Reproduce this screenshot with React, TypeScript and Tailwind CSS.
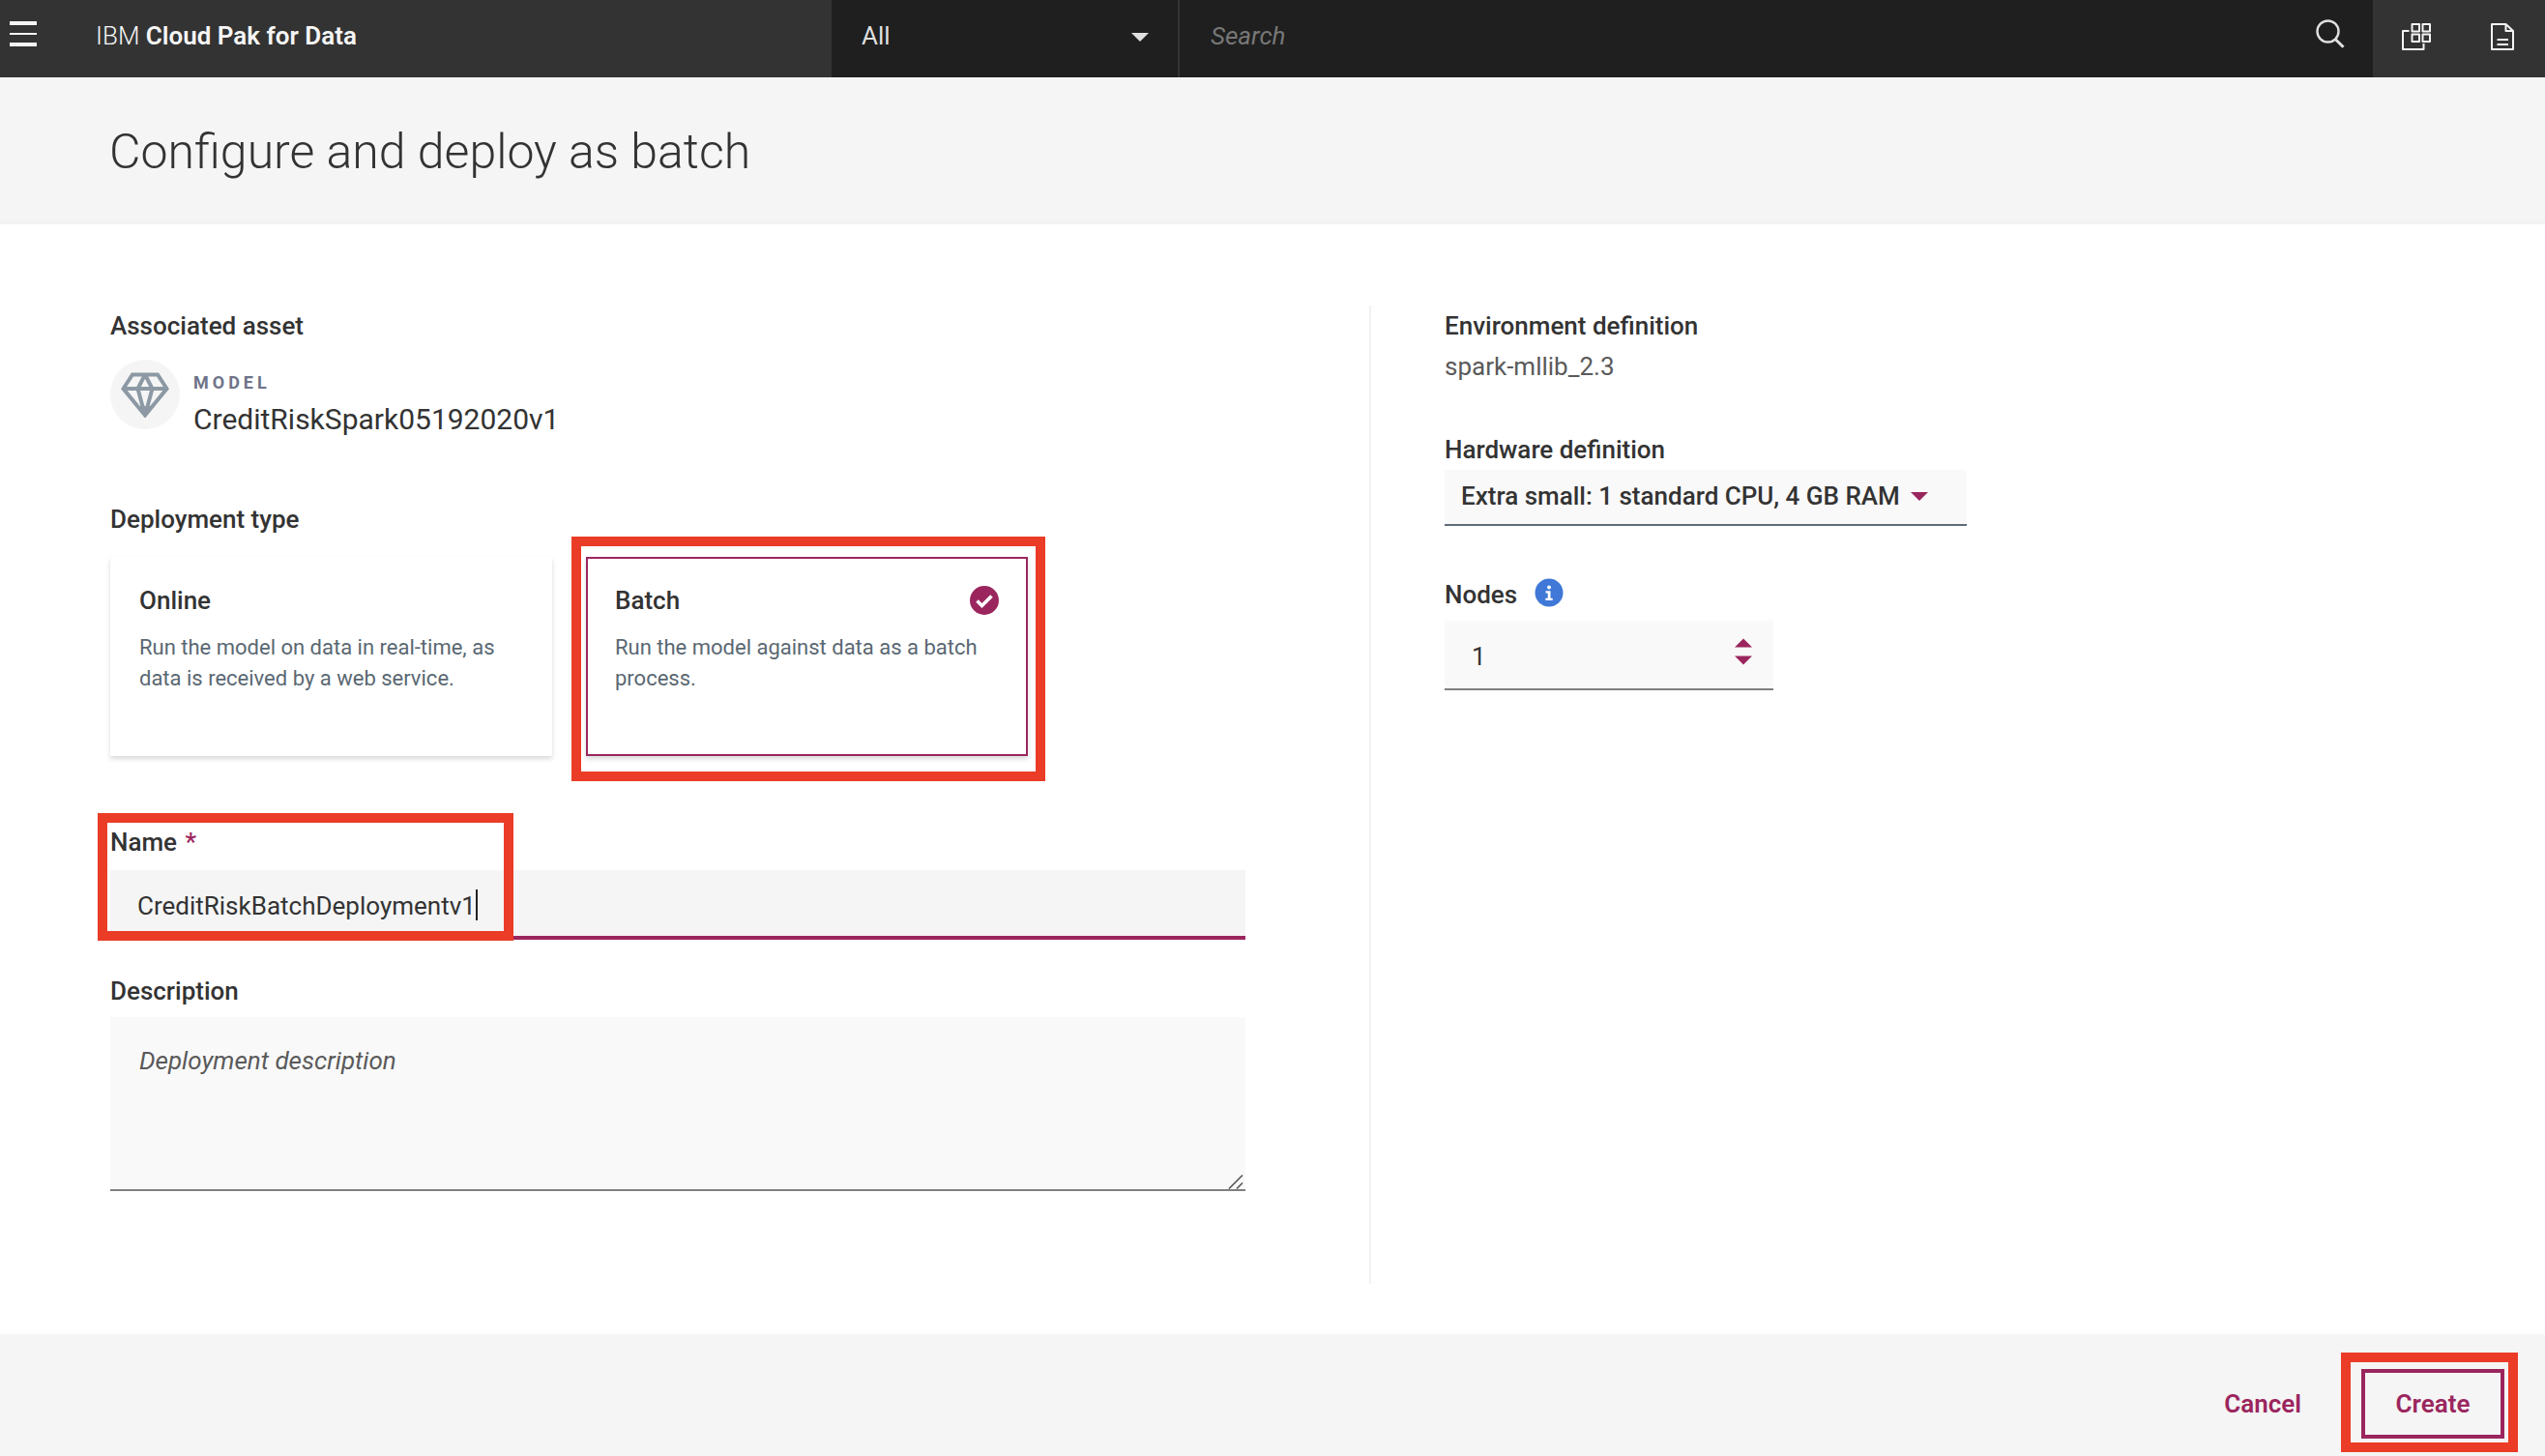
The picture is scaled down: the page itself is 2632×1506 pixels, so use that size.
import { useState, type ReactNode } from "react";

const label = "block text-[26px] leading-[34px] font-medium text-[#333]";

function Highlight({ className }: { className: string }) {
  return <div aria-hidden="true" className={`pointer-events-none absolute border-10 border-[#eb3c27] ${className}`} />;
}

function Caret({ className }: { className: string }) {
  return (
    <svg aria-hidden="true" viewBox="0 0 18 9" className={className} fill="currentColor">
      <path d="M0 0h18L9 9z" />
    </svg>
  );
}

function HeaderIcon({ name, children }: { name: string; children: ReactNode }) {
  return (
    <button type="button" aria-label={name} className="flex w-[89px] items-center justify-center text-[#f4f4f4]">
      {children}
    </button>
  );
}

function Header() {
  return (
    <header className="flex h-20 bg-[#333] text-[26px]">
      <div className="flex w-[860px] shrink-0 items-center">
        <button type="button" aria-label="Open menu" className="pb-2.5 pl-2.5 text-[#f5f5f5]">
          <svg viewBox="0 0 28 26" className="h-[26px] w-7" fill="currentColor">
            <path d="M0 0h28v4H0zM0 12h28v2H0zM0 22h28v4H0z" />
          </svg>
        </button>
        <a href="#home" className="pb-1.5 pl-[61px] leading-8 font-light text-[#f5f5f5]">
          IBM <span className="font-semibold">Cloud Pak for Data</span>
        </a>
      </div>
      <div className="flex min-w-0 flex-1 bg-[#1f1f1f]">
        <div className="relative w-[360px] shrink-0 border-r-2 border-[#333]">
          <select aria-label="Search scope" className="h-full w-full appearance-none pb-1.5 pl-[31px] text-[#dfdfdf] outline-none">
            <option>All</option>
          </select>
          <Caret className="pointer-events-none absolute top-[34px] right-[30px] h-[9px] w-[18px] text-[#dfdfdf]" />
        </div>
        <input
          type="search"
          aria-label="Search"
          placeholder="Search"
          className="min-w-0 flex-1 pb-1.5 pl-8 text-[#dfdfdf] italic outline-none placeholder:text-[#777]"
        />
        <button type="button" aria-label="Submit search" className="mr-[29px] pb-2.5 text-[#dfdfdf]">
          <svg viewBox="0 0 30 30" className="size-[30px]" fill="none" stroke="currentColor" strokeWidth="2.4">
            <circle cx="12.5" cy="12.5" r="11" />
            <path d="M20.2 20.5l8.3 8.3" strokeWidth="3" />
          </svg>
        </button>
      </div>
      <div className="flex shrink-0 bg-[#333] pb-1">
        <HeaderIcon name="Applications">
          <svg viewBox="0 0 30 28" className="h-7 w-[30px]" fill="none" stroke="currentColor" strokeWidth="2" strokeLinejoin="round">
            <path d="M7.500 8H1v19h21.500v-6" />
            <rect x="10.500" y="1" width="7.500" height="7.500" />
            <rect x="21.500" y="1" width="7.500" height="7.500" />
            <rect x="10.500" y="11.500" width="7.500" height="7.500" />
            <rect x="21.500" y="11.500" width="7.500" height="7.500" />
          </svg>
        </HeaderIcon>
        <HeaderIcon name="Documentation">
          <svg viewBox="0 0 24 28" className="h-7 w-6" fill="none" stroke="currentColor" strokeWidth="2" strokeLinejoin="round">
            <path d="M1 1h14.500L23 8v19H1z" />
            <path d="M15.500 1v7H23M6.500 17H18M6.500 22H18" />
          </svg>
        </HeaderIcon>
      </div>
    </header>
  );
}

function Asset() {
  return (
    <section>
      <h2 className={label}>Associated asset</h2>
      <div className="mt-[18px] flex gap-[14px]">
        <div className="flex size-[72px] items-center justify-center rounded-full bg-[#f5f5f5]">
          <svg viewBox="0 0 50 48" className="h-12 w-[50px]" fill="none" stroke="#8c99a5" strokeWidth="4">
            <path d="M12 3.500h26L47.500 18 25 45.500 2.500 18z" />
            <path d="M2.500 18h45M25 3.500L17.500 18 24 42M25 3.500L32.500 18 26 42" />
            <path d="M21.500 38h7L25 44z" fill="#8c99a5" />
          </svg>
        </div>
        <div className="pt-3">
          <p className="text-lg leading-6 font-bold tracking-[4px] text-[#6f7389]">MODEL</p>
          <p className="mt-1.5 text-3xl leading-10 text-[#333]">CreditRiskSpark05192020v1</p>
        </div>
      </div>
    </section>
  );
}

function TypeCard(props: { title: string; text: string; checked: boolean; onSelect: () => void }) {
  return (
    <label
      className={`block h-[206px] w-[457px] cursor-pointer border-2 bg-white px-7 pt-[26px] shadow-[0_3px_5px_rgba(0,0,0,0.15)] ${
        props.checked ? "border-[#9b265e]" : "border-white"
      }`}
    >
      <input type="radio" name="deployment-type" checked={props.checked} onChange={props.onSelect} className="sr-only" />
      <span className="flex items-center justify-between">
        <span className="text-[26px] leading-[34px] font-medium text-[#333]">{props.title}</span>
        {props.checked && (
          <svg aria-hidden="true" viewBox="0 0 30 30" className="size-[30px]">
            <circle cx="15" cy="15" r="15" fill="#9b265e" />
            <path d="M7.500 15.500l5 5L22.500 10.500" fill="none" stroke="#fff" strokeWidth="3.600" />
          </svg>
        )}
      </span>
      <span className="mt-4 block text-[22px] leading-8 text-[#5a6872]">{props.text}</span>
    </label>
  );
}

function Configuration() {
  const [type, setType] = useState("batch");
  const [name, setName] = useState("CreditRiskBatchDeploymentv1");
  return (
    <form className="border-r-2 border-[#f2f2f2] pt-1 pr-32 pl-[114px]">
      <Asset />
      <fieldset className="mt-[66px]">
        <legend className={label}>Deployment type</legend>
        <div className="mt-[22px] flex gap-[35px]">
          <TypeCard
            title="Online"
            text="Run the model on data in real-time, as data is received by a web service."
            checked={type === "online"}
            onSelect={() => setType("online")}
          />
          <div className="relative">
            <TypeCard
              title="Batch"
              text="Run the model against data as a batch process."
              checked={type === "batch"}
              onSelect={() => setType("batch")}
            />
            <Highlight className="-top-[21px] -right-[18px] -bottom-[26px] -left-[15px]" />
          </div>
        </div>
      </fieldset>
      <div className="relative mt-[72px]">
        <label htmlFor="name" className={label}>
          Name <span className="pl-0.5 text-[#9b265e]">*</span>
        </label>
        <input
          id="name"
          value={name}
          onChange={(e) => setName(e.target.value)}
          className="mt-3 block h-[72px] w-full border-b-4 border-[#9b265e] bg-[#f5f5f5] px-7 pt-1.5 text-[26px] text-[#333] outline-none"
        />
        <span aria-hidden="true" className="absolute bottom-5 left-[378px] h-8 w-0.5 bg-[#222]" />
        <Highlight className="-top-[13px] -bottom-px -left-[13px] w-[430px]" />
      </div>
      <div className="relative mt-9">
        <label htmlFor="description" className={label}>
          Description
        </label>
        <textarea
          id="description"
          placeholder="Deployment description"
          className="mt-2.5 block h-[180px] w-full resize-none border-b-2 border-[#808080] bg-[#f9f9f9] px-[30px] py-7 text-[26px] leading-[34px] text-[#333] outline-none placeholder:text-[#5a5a5a] placeholder:italic"
        />
        <svg aria-hidden="true" viewBox="0 0 16 16" className="absolute right-0.5 bottom-0.5 size-4" stroke="#555" strokeWidth="1.600">
          <path d="M1 15.500L15 1.500M9 15.500L15 9.500" />
        </svg>
      </div>
    </form>
  );
}

function Resources() {
  const [nodes, setNodes] = useState(1);
  return (
    <aside className="pt-1 pl-[76px]">
      <h2 className={label}>Environment definition</h2>
      <p className="mt-2 text-[26px] leading-[34px] text-[#5a5a5a]">spark-mllib_2.3</p>
      <label htmlFor="hardware" className={`mt-[52px] ${label}`}>
        Hardware definition
      </label>
      <div className="relative mt-1 w-[540px]">
        <select
          id="hardware"
          className="block h-[58px] w-full appearance-none border-b-2 border-[#5f6b77] bg-[#f9f9f9] pb-0.5 pl-[17px] text-[26px] font-medium text-[#333] outline-none"
        >
          <option>Extra small: 1 standard CPU, 4 GB RAM</option>
        </select>
        <Caret className="pointer-events-none absolute top-[23px] right-10 h-[9px] w-[18px] text-[#9b265e]" />
      </div>
      <div className="mt-[54px] flex gap-[18px]">
        <label htmlFor="nodes" className={label}>
          Nodes
        </label>
        <button type="button" aria-label="About nodes" className="size-[30px]">
          <svg viewBox="0 0 30 30" className="size-[30px]">
            <circle cx="15" cy="15" r="14.500" fill="#3f78d6" />
            <g fill="#fff">
              <circle cx="15" cy="9.500" r="2" />
              <path d="M11.500 13.200h5v7.600h2.200V23h-7.400v-2.200h2.400v-5.400h-2.200z" />
            </g>
          </svg>
        </button>
      </div>
      <div className="relative mt-2.5 w-[340px]">
        <input
          id="nodes"
          type="number"
          min={1}
          value={nodes}
          onChange={(e) => setNodes(Number(e.target.value))}
          className="block h-[72px] w-full [appearance:textfield] border-b-2 border-[#808080] bg-[#f9f9f9] pt-1 pl-7 text-[26px] text-[#333] outline-none [&::-webkit-inner-spin-button]:appearance-none"
        />
        <div className="absolute top-[18px] right-[22px] flex flex-col gap-2 text-[#9b265e]">
          <button type="button" aria-label="Increase nodes" onClick={() => setNodes(nodes + 1)}>
            <Caret className="h-2.5 w-[18px] rotate-180" />
          </button>
          <button type="button" aria-label="Decrease nodes" onClick={() => setNodes(Math.max(1, nodes - 1))}>
            <Caret className="h-2.5 w-[18px]" />
          </button>
        </div>
      </div>
    </aside>
  );
}

export default function App() {
  return (
    <div className="flex min-h-screen flex-col bg-white font-['Roboto',sans-serif]">
      <Header />
      <div className="border-b-4 border-[#f2f2f2] bg-[#f5f5f5] pt-[47px] pb-[41px] pl-[113px]">
        <h1 className="text-[50px] leading-[60px] font-light text-[#333]">Configure and deploy as batch</h1>
      </div>
      <main className="grid flex-1 grid-cols-[709fr_607fr] pt-[84px] pb-[54px]">
        <Configuration />
        <Resources />
      </main>
      <footer className="flex justify-end gap-[34px] bg-[#f5f5f5] pt-[34px] pr-[42px] pb-[18px] text-[26px] font-semibold text-[#9b265e] shadow-[0_-1px_4px_rgba(0,0,0,0.08)]">
        <button type="button" className="h-[72px] px-7">
          Cancel
        </button>
        <div className="relative">
          <button type="button" className="h-[72px] w-[148px] border-4 border-[#9b265e]">
            Create
          </button>
          <Highlight className="-top-[17px] -right-[14px] -bottom-[14px] -left-[21px]" />
        </div>
      </footer>
    </div>
  );
}
